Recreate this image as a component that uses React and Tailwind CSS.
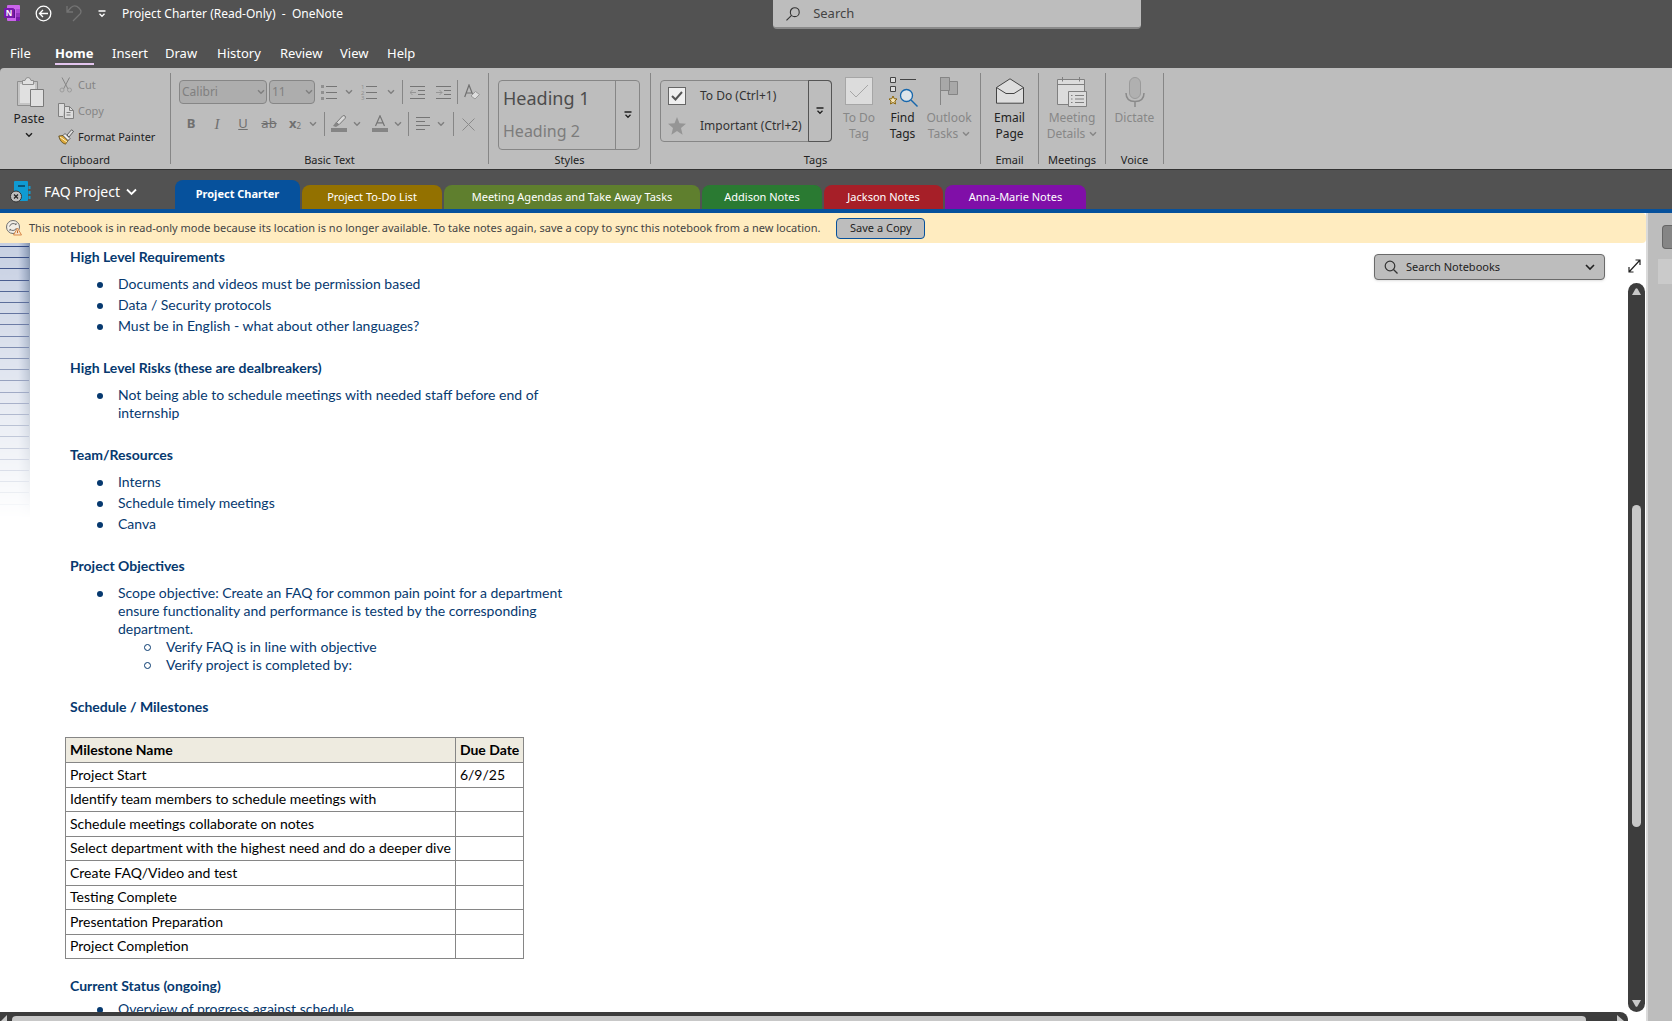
import React, { useState } from 'react';

// CONSTANTS
const MENU = [
  { label: 'File', width: 'w-[45px]' },
  { label: 'Home', width: 'w-[57px]' },
  { label: 'Insert', width: 'w-[53px]' },
  { label: 'Draw', width: 'w-[52px]' },
  { label: 'History', width: 'w-[63px]' },
  { label: 'Review', width: 'w-[60px]' },
  { label: 'View', width: 'w-[47px]' },
  { label: 'Help', width: 'w-[40px]' },
];

const SECTIONS = [
  { label: 'Project Charter', style: 'w-[125px] bg-[#06519c]' },
  { label: 'Project To-Do List', style: 'w-[140px] bg-[#937100]' },
  { label: 'Meeting Agendas and Take Away Tasks', style: 'w-[256px] bg-[#5f7f2e]' },
  { label: 'Addison Notes', style: 'w-[120px] bg-[#2a7a32]' },
  { label: 'Jackson Notes', style: 'w-[119px] bg-[#a61f28]' },
  { label: 'Anna-Marie Notes', style: 'w-[141px] bg-[#800fa8]' },
];

const MILESTONES = [
  ['Project Start', '6/9/25'],
  ['Identify team members to schedule meetings with', ''],
  ['Schedule meetings collaborate on notes', ''],
  ['Select department with the highest need and do a deeper dive', ''],
  ['Create FAQ/Video and test', ''],
  ['Testing Complete', ''],
  ['Presentation Preparation', ''],
  ['Project Completion', ''],
];

// --- ICONS ---
const Chevron = ({ className = '' }) => (
  <svg width="8" height="6" viewBox="0 0 8 6" fill="none" stroke="currentColor" strokeWidth="1.5" className={className}>
    <path d="M1 1.2 4 4.2 7 1.2" />
  </svg>
);

const BarChevron = () => (
  <svg width="8" height="8" viewBox="0 0 8 8" fill="none" stroke="currentColor" strokeWidth="1.3">
    <path d="M0.5 1h7M1.5 3.8 4 6.3 6.500 3.8" />
  </svg>
);

const OneNoteLogo = () => (
  <svg width="17" height="17" viewBox="0 0 17 17">
    <rect x="3" width="13" height="16" rx="1" fill="#ca64ea" />
    <path d="M12 4h4v4h-4z" fill="#ae4bd5" />
    <path d="M12 8h4v4h-4z" fill="#9332bf" />
    <path d="M12 12h4v3q0 1-1 1h-3z" fill="#7719aa" />
    <path d="M3 4h7q1 0 1 1v8H3z" fill="#5b1488" />
    <rect y="3" width="10" height="10" rx="1" fill="#7719aa" />
    <text x="5" y="11" textAnchor="middle" fontSize="8" fontWeight="700" fill="#fff">N</text>
  </svg>
);

const PasteIcon = () => (
  <svg width="28" height="31" viewBox="0 0 28 31" fill="#d2d2d2" stroke="#8f8f8f">
    <path d="M.5 4.500h20v24H.5z" fill="#c4c4c4" />
    <path d="M3 7h15v19H3z" fill="#e0e0e0" stroke="none" />
    <path d="M5.500 7.500v-4h2.500q.5-3 3-3t3 3h2.500v4z" fill="#e0e0e0" />
    <path d="M13.500 12.500h13v17h-13z" fill="#e0e0e0" stroke="#7a7a7a" />
  </svg>
);

const CutIcon = () => (
  <svg width="16" height="16" viewBox="0 0 16 16" fill="none" stroke="#858585">
    <path d="M4 .5 10 12M11.500.5 5.500 12" />
    <circle cx="4" cy="13" r="2" stroke="#9c9c9c" />
    <circle cx="11.500" cy="13" r="2" stroke="#9c9c9c" />
  </svg>
);

const CopyIcon = () => (
  <svg width="16" height="16" viewBox="0 0 16 16" fill="#dcdcdc" stroke="#808080">
    <path d="M5 13.500H.5V.5h6v3" />
    <path d="M6.500 3.500h5l4 4v8h-9z" />
    <path d="M11.500 3.500v4h4M8.500 9.500h4M8.500 12h4" fill="none" />
  </svg>
);

const BrushIcon = () => (
  <svg width="16" height="16" viewBox="0 0 16 16">
    <path d="M.8 7 5 6.500l5 5-2.500 3.700Q2 13.500.8 7z" fill="#dca93b" stroke="#5c4a1c" strokeWidth=".8" />
    <path d="m2 8 7 5" stroke="#fff3c9" />
    <path d="m5 6.500 2-2 5 5-2 2z" fill="#eee" stroke="#444" strokeWidth=".8" />
    <path d="m9 6 4.500-5.200 2 1.600L11 8z" fill="#ddd" stroke="#444" strokeWidth=".8" />
  </svg>
);

const ListIcon = ({ numbered }) => (
  <svg width="16" height="16" viewBox="0 0 16 16" stroke="#757575" className="overflow-visible">
    <path d="M5 2.500h11M5 8.500h11M5 14.500h11" />
    {numbered ? (
      <g stroke="none" fill="#909090" fontSize="6">
        <text x="0" y="4.500">1</text>
        <text x="0" y="10.500">2</text>
        <text x="0" y="16">3</text>
      </g>
    ) : (
      <path d="M0 1h3v3H0zM0 7h3v3H0zM0 13h3v3H0z" fill="#909090" stroke="none" />
    )}
  </svg>
);

const IndentIcon = ({ right }) => (
  <svg width="15" height="15" viewBox="0 0 15 15" fill="none" stroke="#757575">
    <path d="M0 1.500h15M8 5.500h7M8 9.500h7M0 13.500h15" />
    <path d={right ? 'M0 7.500h6M3.500 5 6 7.500 3.500 10' : 'M6 7.500H0M2.500 5 0 7.500 2.500 10'} stroke="#959595" />
  </svg>
);

const ClearFormatIcon = () => (
  <svg width="16" height="16" viewBox="0 0 16 16" fill="none" stroke="#707070">
    <path d="M.7 13 5 1l3.500 9M2 9h5.500" strokeWidth="1.200" />
    <path d="m7 12 4.500-4.500 4 3L11 15z" fill="#ddd" stroke="#999" />
  </svg>
);

const HighlightIcon = () => (
  <svg width="16" height="18" viewBox="0 0 16 18">
    <path d="M0 13h16v4H0z" fill="#858585" />
    <path d="M2 11l3-4 3 3-3 2z" fill="#858585" />
    <path d="M5.500 7.500 11.500 1q1.500-1 2.500 0t0 2.500l-6 6.200z" fill="#d8d8d8" stroke="#777" />
  </svg>
);

const FontColorIcon = () => (
  <svg width="16" height="18" viewBox="0 0 16 18">
    <path d="M0 13h16v4H0z" fill="#858585" />
    <path d="M3.500 11 8 .8 12.500 11M5 7.800h6" fill="none" stroke="#757575" strokeWidth="1.200" />
  </svg>
);

const AlignIcon = () => (
  <svg width="15" height="14" viewBox="0 0 15 14" stroke="#757575">
    <path d="M0 .5h14M0 4.500h9M0 8.500h14M0 12.500h9" />
  </svg>
);

const CrossIcon = () => (
  <svg width="13" height="13" viewBox="0 0 13 13" stroke="#8a8a8a">
    <path d="m.5.5 12 12M12.500.5l-12 12" />
  </svg>
);

const TodoTagIcon = () => (
  <svg width="28" height="28" viewBox="0 0 28 28" fill="none">
    <rect x=".5" y=".5" width="27" height="27" fill="#dcdcdc" stroke="#a6a6a6" />
    <path d="m5 14 6 6L23 8" stroke="#a6a6a6" />
  </svg>
);

const FindTagsIcon = () => (
  <svg width="30" height="30" viewBox="0 0 30 30" fill="none">
    <path d="M2.500.5h5v5h-5zM2.500 9.500h5v5h-5z" fill="#dcdcdc" stroke="#444" />
    <path d="M12 2.500h16" stroke="#444" />
    <path d="m5 19 1.200 2.700 2.800.3-2.100 2 .6 3L5 25.500 2.500 27l.6-3L1 22l2.800-.3z" fill="#f4e3b6" stroke="#8b6508" />
    <circle cx="18.500" cy="18.500" r="6" fill="#dfe5ea" stroke="#1767ac" strokeWidth="1.300" />
    <path d="m23 23 6.500 6.500" stroke="#1767ac" strokeWidth="1.400" />
  </svg>
);

const FlagIcon = () => (
  <svg width="20" height="28" viewBox="0 0 20 28" fill="#a8a8a8" stroke="#858585">
    <path d="M9.500 4.500h9v13h-9z" />
    <path d="M1.500.5h9v13h-9z" />
    <path d="M1.500 0v28" />
  </svg>
);

const MailIcon = () => (
  <svg width="28" height="27" viewBox="0 0 28 27" fill="#dedede" stroke="#444">
    <path d="M.5 10.500 14 1.800l13.500 8.700v15.700H.5z" />
    <path d="m.5 10.500 9.500 6h8l9.500-6" fill="none" />
  </svg>
);

const MeetingIcon = () => (
  <svg width="30" height="30" viewBox="0 0 30 30" fill="#dcdcdc" stroke="#808080">
    <path d="M.5 2.500h27v25H.5z" />
    <path d="M.5 7.500h27M5.500 0v4.500M22.500 0v4.500" fill="none" />
    <path d="M11.500 14.500h18v15h-18z" />
    <path d="M14 18.500h1.500M18 18.500h9M14 22h1.500M18 22h9M14 25.500h1.500M18 25.500h9" />
  </svg>
);

const MicIcon = () => (
  <svg width="20" height="30" viewBox="0 0 20 30" fill="none" stroke="#8a8a8a">
    <rect x="4.500" y=".5" width="11" height="21" rx="5.500" fill="#b0b0b0" stroke="#9a9a9a" />
    <path d="M1 16q0 8.500 9 8.500t9-8.500M10 24.500V30" strokeWidth="1.500" />
  </svg>
);

const NotebookIcon = () => (
  <svg width="22" height="22" viewBox="0 0 22 22">
    <path d="M5 0h12q1 0 1 1v18q0 1-1 1H5q-1 0-1-1V1q0-1 1-1z" fill="#0f9bd3" />
    <path d="M8 4h7v2H8z" fill="#0b5578" />
    <path d="M19.500 5v3m0 2v3m0 2v3" stroke="#0f9bd3" strokeWidth="2" />
    <circle cx="6" cy="15.500" r="5.500" fill="#bdbdbd" stroke="#333" />
    <path d="m4 13.500 4 4m0-4-4 4" stroke="#222" strokeWidth="1.200" />
  </svg>
);

const SyncWarnIcon = () => (
  <svg width="16" height="16" viewBox="0 0 16 16" fill="none" stroke="#6f6f6f">
    <circle cx="7" cy="7" r="6.500" fill="#f2eee6" />
    <path d="M3.500 6.500q1-3 3.500-3 2 0 3 1.500V3M10.500 8q-1 2.500-3.500 2.500-2 0-3-1.500v2" />
    <path d="m11.500 8 4 7h-8z" fill="#f6e0c8" stroke="#d98a4a" />
    <path d="M11.500 10.500V13" stroke="#c0682a" />
  </svg>
);

// Ruled paper strip on the page's left edge, fading out downwards
const PaperEdge = () => (
  <svg width="34" height="276" viewBox="0 0 34 276" className="block shrink-0">
    <defs>
      <linearGradient id="fade" x1="0" y1="0" x2="0" y2="1">
        <stop offset="0" stopColor="#fff" />
        <stop offset=".4" stopColor="#fff" stopOpacity=".6" />
        <stop offset="1" stopColor="#fff" stopOpacity="0" />
      </linearGradient>
      <linearGradient id="edge" x1="0" y1="0" x2="1" y2="0">
        <stop offset=".6" stopColor="#5d78a8" stopOpacity="0" />
        <stop offset="1" stopColor="#4a6080" stopOpacity=".55" />
      </linearGradient>
      <mask id="paper"><rect width="34" height="276" fill="url(#fade)" /></mask>
    </defs>
    <g mask="url(#paper)">
      <rect width="30" height="276" fill="#c6cfe2" />
      <rect width="30" height="276" fill="url(#edge)" />
      {Array.from({ length: 24 }, (_, i) => (
        <rect key={i} y={Math.round(3 + i * 11.2)} width="29" height="1" fill="#2f4680" />
      ))}
    </g>
  </svg>
);

// --- COMPONENTS ---
const Group = ({ label, className = '', body = '', children }) => (
  <section aria-label={label} className={`flex shrink-0 flex-col ${className}`}>
    <div className={`flex h-[84px] pt-1 ${body}`}>{children}</div>
    <div className="text-center text-[11px] leading-4 text-[#222]">{label}</div>
  </section>
);

const Divider = () => <div className="mt-[5px] h-[91px] w-px shrink-0 bg-[#868686]" />;
const Rule = ({ className = '' }) => <div className={`h-6 w-px shrink-0 bg-[#868686] ${className}`} />;

const Tool = ({ label, children }) => (
  <button aria-label={label} className="flex h-6 w-6 shrink-0 items-center justify-center text-[#707070]">{children}</button>
);

const Drop = ({ label }) => (
  <button aria-label={label} className="flex h-6 w-3 shrink-0 items-center justify-center text-[#808080]"><Chevron /></button>
);

const FontSelect = ({ label, value, className }) => (
  <div className={`relative shrink-0 ${className}`}>
    <select aria-label={label} defaultValue={value} className="h-6 w-full appearance-none rounded border border-[#868686] bg-[#adadad] px-[2px] text-[12px] text-[#808080]">
      <option>{value}</option>
    </select>
    <Chevron className="pointer-events-none absolute top-[9px] right-[2px] text-[#808080]" />
  </div>
);

const BigButton = ({ icon, lines, muted, drop, className }) => (
  <button className={`flex flex-col items-center pt-[5px] text-[12px] leading-4 ${muted ? 'text-[#878787]' : 'text-[#222]'} ${className}`}>
    <span className="flex h-[33px] items-start justify-center">{icon}</span>
    <span>{lines[0]}</span>
    <span className="flex items-center gap-1">{lines[1]}{drop && <Chevron />}</span>
  </button>
);

const Ribbon = () => (
  <div className="flex h-[102px] shrink-0 overflow-hidden rounded-tl border-b border-[#333] bg-[#bdbdbd]">
    <Group label="Clipboard" className="w-[170px]">
      <button className="flex w-[58px] flex-col items-center pt-[5px] pl-1 text-[12px] text-[#222]">
        <PasteIcon />
        <span className="mt-[3px] mr-1 leading-4">Paste</span>
        <Chevron className="mt-[5px] mr-1" />
      </button>
      <div className="flex flex-col text-[11px]">
        <button className="flex h-[26px] items-center gap-1 text-[#858585]"><CutIcon />Cut</button>
        <button className="flex h-[26px] items-center gap-1 text-[#858585]"><CopyIcon />Copy</button>
        <button className="flex h-[26px] items-center gap-1 text-[#222]"><BrushIcon />Format Painter</button>
      </div>
    </Group>
    <Divider />
    <Group label="Basic Text" className="w-[317px]" body="pl-2">
      <div className="flex flex-col gap-2 pt-2">
        <div className="flex items-center">
          <FontSelect label="Font" value="Calibri" className="w-[88px]" />
          <FontSelect label="Font size" value="11" className="ml-[2px] w-[46px]" />
          <div className="mr-[2px] ml-[2px]"><Tool label="Bullets"><ListIcon /></Tool></div>
          <Drop label="Bullet styles" />
          <div className="mr-1 ml-[2px]"><Tool label="Numbering"><ListIcon numbered /></Tool></div>
          <Drop label="Number styles" />
          <Rule className="mr-[2px] ml-[5px]" />
          <Tool label="Decrease indent"><IndentIcon /></Tool>
          <div className="ml-[2px]"><Tool label="Increase indent"><IndentIcon right /></Tool></div>
          <Rule className="mr-[2px] ml-[2px]" />
          <Tool label="Clear formatting"><ClearFormatIcon /></Tool>
        </div>
        <div className="flex items-center">
          <div className="flex gap-[2px] text-[13px]">
            <Tool label="Bold"><b>B</b></Tool>
            <Tool label="Italic"><i className="font-['Liberation_Serif',serif] text-[15px]">I</i></Tool>
            <Tool label="Underline"><u>U</u></Tool>
            <Tool label="Strikethrough"><s>ab</s></Tool>
            <Tool label="Subscript"><b>x</b><sub className="text-[8px]">2</sub></Tool>
          </div>
          <Drop label="Script styles" />
          <Rule className="mr-[2px] ml-[5px]" />
          <Tool label="Highlight"><HighlightIcon /></Tool>
          <Drop label="Highlight colors" />
          <div className="ml-[5px]"><Tool label="Font color"><FontColorIcon /></Tool></div>
          <Drop label="Font colors" />
          <Rule className="mr-[2px] ml-1" />
          <Tool label="Align"><AlignIcon /></Tool>
          <Drop label="Alignments" />
          <Rule className="mr-[2px] ml-[6px]" />
          <Tool label="Delete"><CrossIcon /></Tool>
        </div>
      </div>
    </Group>
    <Divider />
    <Group label="Styles" className="w-[161px]" body="pl-[9px]">
      <div className="mt-2 flex h-[70px] w-[142px] rounded border border-[#868686]">
        <div className="flex flex-1 flex-col justify-around pb-[2px] pl-1 text-left">
          <button className="text-left text-[18px] leading-6 text-[#4c4c4c]">Heading 1</button>
          <button className="text-left text-[16px] leading-6 text-[#7c7c7c]">Heading 2</button>
        </div>
        <button aria-label="More styles" className="flex w-6 items-center justify-center border-l border-[#868686] text-[#222]"><BarChevron /></button>
      </div>
    </Group>
    <Divider />
    <Group label="Tags" className="w-[329px]" body="pl-[9px]">
      <div className="mt-2 flex h-[62px] w-[172px] shrink-0 rounded border border-[#868686]">
        <div className="flex flex-1 flex-col justify-around pl-[7px] text-[12px] text-[#333]">
          <button className="flex items-center gap-[14px] whitespace-nowrap">
            <svg width="18" height="18" viewBox="0 0 18 18" fill="none">
              <rect x=".5" y=".5" width="17" height="17" fill="#f0f0f0" stroke="#666" />
              <path d="m4 9 3.500 3.500L14 5" stroke="#555" strokeWidth="2" />
            </svg>
            To Do (Ctrl+1)
          </button>
          <button className="flex items-center gap-[14px] whitespace-nowrap">
            <svg width="18" height="18" viewBox="0 0 18 18" fill="#959595">
              <path d="m9 0 2.500 6.300 6.500.5-5 4.200 1.600 6.700L9 14l-5.600 3.700L5 11 0 6.800l6.500-.5z" />
            </svg>
            Important (Ctrl+2)
          </button>
        </div>
        <button aria-label="More tags" className="-m-px flex w-6 items-center justify-center rounded-r border border-[#555] text-[#222]"><BarChevron /></button>
      </div>
      <BigButton className="ml-[5px] w-[44px]" muted icon={<TodoTagIcon />} lines={['To Do', 'Tag']} />
      <BigButton className="w-[43px]" icon={<FindTagsIcon />} lines={['Find', 'Tags']} />
      <BigButton className="w-[50px]" muted drop icon={<FlagIcon />} lines={['Outlook', 'Tasks']} />
    </Group>
    <Divider />
    <Group label="Email" className="w-[57px]">
      <BigButton className="w-full" icon={<MailIcon />} lines={['Email', 'Page']} />
    </Group>
    <Divider />
    <Group label="Meetings" className="w-[66px]">
      <BigButton className="w-full" muted drop icon={<MeetingIcon />} lines={['Meeting', 'Details']} />
    </Group>
    <Divider />
    <Group label="Voice" className="w-[57px]">
      <BigButton className="w-full" muted icon={<MicIcon />} lines={['Dictate', '']} />
    </Group>
    <Divider />
  </div>
);

const Heading = ({ children }) => <h2 className="font-bold">{children}</h2>;

const Bullets = ({ items }) => (
  <ul className="mt-[9px] mb-6 flex flex-col gap-[3px]">
    {items.map(item => <Bullet key={item}>{item}</Bullet>)}
  </ul>
);

const Bullet = ({ children }) => (
  <li className="flex">
    <span className="mt-[7px] mr-[15px] ml-[27px] h-[6px] w-[6px] shrink-0 rounded-full bg-[#06396f]" />
    <div>{children}</div>
  </li>
);

const SubBullet = ({ children }) => (
  <li className="flex">
    <span className="mt-[6px] mr-[15px] ml-[26px] h-[7px] w-[7px] shrink-0 rounded-full border border-[#06396f]" />
    <span>{children}</span>
  </li>
);

const Note = () => (
  <article className="w-[535px] shrink-0 pt-[5px] pl-9 font-['Lato','Open_Sans',sans-serif] text-[14px] leading-[18px] text-[#06396f]">
    <Heading>High Level Requirements</Heading>
    <Bullets items={['Documents and videos must be permission based', 'Data / Security protocols', 'Must be in English - what about other languages?']} />
    <Heading>High Level Risks (these are dealbreakers)</Heading>
    <Bullets items={['Not being able to schedule meetings with needed staff before end of internship']} />
    <Heading>Team/Resources</Heading>
    <Bullets items={['Interns', 'Schedule timely meetings', 'Canva']} />
    <Heading>Project Objectives</Heading>
    <ul className="mt-[9px] mb-6">
      <Bullet>
        Scope objective: Create an FAQ for common pain point for a department ensure functionality and performance is tested by the corresponding department.
        <ul>
          <SubBullet>Verify FAQ is in line with objective</SubBullet>
          <SubBullet>Verify project is completed by:</SubBullet>
        </ul>
      </Bullet>
    </ul>
    <Heading>Schedule / Milestones</Heading>
    <table className="mt-[21px] -ml-[5px] h-[222px] w-[453px] border-collapse text-left text-black">
      <thead>
        <tr className="h-[25px] bg-[#eeebe0]">
          <th className="border border-[#868686] px-1">Milestone Name</th>
          <th className="w-[68px] border border-[#868686] px-1 whitespace-nowrap">Due Date</th>
        </tr>
      </thead>
      <tbody>
        {MILESTONES.map(([name, due]) => (
          <tr key={name}>
            <td className="border border-[#868686] px-1 whitespace-nowrap">{name}</td>
            <td className="border border-[#868686] px-1">{due}</td>
          </tr>
        ))}
      </tbody>
    </table>
    <div className="mt-[18px]"><Heading>Current Status (ongoing)</Heading></div>
    <ul className="mt-[5px]"><Bullet>Overview of progress against schedule</Bullet></ul>
  </article>
);

// --- MAIN APP ---
export default function App() {
  const [menu, setMenu] = useState('Home');
  const [section, setSection] = useState('Project Charter');

  return (
    <div className="flex h-screen flex-col overflow-hidden bg-[#525252] font-['Noto_Sans','Open_Sans',sans-serif] text-[12px] text-white">
      <header className="flex h-[34px] shrink-0 items-start">
        <div className="flex h-[27px] flex-1 items-center pl-1">
          <OneNoteLogo />
          <button aria-label="Back" className="ml-[14px]">
            <svg width="17" height="17" viewBox="0 0 17 17" fill="none" stroke="#fff" strokeWidth="1.300">
              <circle cx="8.500" cy="8.500" r="7.300" />
              <path d="M13 8.500H4.500M8 5 4.500 8.500 8 12" />
            </svg>
          </button>
          <button aria-label="Undo" className="ml-[14px]">
            <svg width="16" height="17" viewBox="0 0 16 17" fill="none" stroke="#747474" strokeWidth="1.300">
              <path d="M1 1v6h6M1 7l4-4.500Q9-1 13 3t0 7l-6 6" />
            </svg>
          </button>
          <button aria-label="Customize toolbar" className="ml-4"><BarChevron /></button>
          <h1 className="ml-4 whitespace-pre">Project Charter (Read-Only)  -  OneNote</h1>
        </div>
        <label className="flex h-[29px] w-[22%] items-center rounded-b border-b-2 border-[#8a8a8a] bg-[#bdbdbd] pl-[13px] text-[#444]">
          <svg width="16" height="16" viewBox="0 0 16 16" fill="none" stroke="#333" strokeWidth="1.200">
            <circle cx="9.500" cy="6" r="4.800" />
            <path d="M6 9.500.5 15" />
          </svg>
          <input aria-label="Search" placeholder="Search" className="ml-3 w-full bg-transparent text-[13px] outline-none placeholder:text-[#444]" />
        </label>
        <div className="flex-[0.690]" />
      </header>

      <nav className="flex h-[34px] shrink-0 items-start pt-[9px] pl-[10px] text-[13px]">
        {MENU.map(m => (
          <div key={m.label} className={m.width}>
            <button onClick={() => setMenu(m.label)} className={`border-b-2 leading-5 ${menu === m.label ? 'border-[#e3c5ee] font-bold' : 'border-transparent'}`}>{m.label}</button>
          </div>
        ))}
      </nav>

      <Ribbon />

      <div className="flex h-[43px] shrink-0 items-end border-b-4 border-[#06519c]">
        <button className="flex h-full w-[175px] items-center pt-1 pl-[10px] text-[14px]">
          <NotebookIcon />
          <span className="ml-3">FAQ Project</span>
          <svg width="11" height="8" viewBox="0 0 11 8" fill="none" stroke="currentColor" strokeWidth="1.800" className="ml-[6px]">
            <path d="m1 1.500 4.500 4.500L10 1.500" />
          </svg>
        </button>
        <div className="flex items-end gap-[2px] text-[11px]">
          {SECTIONS.map(s => (
            <button key={s.label} onClick={() => setSection(s.label)} className={`rounded-t-lg whitespace-nowrap ${s.style} ${section === s.label ? 'h-[29px] font-bold' : 'h-6'}`}>{s.label}</button>
          ))}
        </div>
      </div>

      <div className="flex min-h-0 flex-1">
        <main className="flex min-w-0 flex-1 flex-col bg-white">
          <div className="flex h-[30px] shrink-0 items-center rounded-r bg-[#ffecc0] pl-[6px] text-[11px] text-[#444]">
            <SyncWarnIcon />
            <p className="ml-[7px] whitespace-nowrap">This notebook is in read-only mode because its location is no longer available. To take notes again, save a copy to sync this notebook from a new location.</p>
            <button className="ml-4 h-[21px] w-[89px] rounded border border-[#06519c] bg-[#bdbdbd] text-[#222]">Save a Copy</button>
          </div>
          <div className="flex min-h-0 flex-1">
            <div className="flex min-w-0 flex-1 flex-col">
              <div className="flex min-h-0 flex-1 justify-between overflow-hidden">
                <div className="flex items-start">
                  <PaperEdge />
                  <Note />
                </div>
                <div className="mt-[11px] mr-[23px] flex h-[26px] w-[231px] items-center rounded border border-[#6a6a6a] bg-[#bdbdbd] px-[9px] text-[11px] text-[#222] shadow">
                  <svg width="14" height="14" viewBox="0 0 14 14" fill="none" stroke="#333" strokeWidth="1.200">
                    <circle cx="6" cy="6" r="4.800" />
                    <path d="m9.500 9.500 4 4" />
                  </svg>
                  <input aria-label="Search Notebooks" placeholder="Search Notebooks" className="ml-2 min-w-0 flex-1 bg-transparent outline-none placeholder:text-[#222]" />
                  <svg width="10" height="7" viewBox="0 0 10 7" fill="none" stroke="#222" strokeWidth="1.600"><path d="m1 1 4 4 4-4" /></svg>
                </div>
              </div>
              <div className="flex h-[9px] shrink-0 items-end gap-1 rounded-tr-lg bg-[#3d3d3d] pr-1 pl-px">
                <svg width="7" height="6" viewBox="0 0 7 6" fill="#c8c8c8"><path d="M0 6 6 0v6z" /></svg>
                <div className="h-[5px] w-[97%] rounded-t bg-[#c8c8c8]" />
                <svg width="7" height="6" viewBox="0 0 7 6" fill="#c8c8c8" className="ml-auto"><path d="M0 0l7 6H0z" /></svg>
              </div>
            </div>
            <div className="flex w-[18px] shrink-0 flex-col items-start">
              <button aria-label="Full page view" className="flex h-10 items-start pt-4">
                <svg width="13" height="14" viewBox="0 0 13 14" fill="none" stroke="#222" strokeWidth="1.200">
                  <path d="m1 13 11-12M7.500 1H12v5M1 8v5h4.500" />
                </svg>
              </button>
              <div className="mb-[9px] flex w-[17px] flex-1 flex-col items-center rounded-full bg-[#3d3d3d] py-[5px]">
                <svg width="9" height="8" viewBox="0 0 9 8" fill="#c8c8c8"><path d="M3.500.8q1-1.300 2 0L9 7H0z" /></svg>
                <div className="flex-[202]" />
                <div className="w-[9px] flex-[312] rounded-full bg-[#c8c8c8]" />
                <div className="flex-[167]" />
                <svg width="9" height="7" viewBox="0 0 9 7" fill="#c8c8c8"><path d="M0 0h9L5.500 6.200q-1 1.300-2 0z" /></svg>
              </div>
            </div>
          </div>
        </main>
        <aside className="flex w-[26px] shrink-0 flex-col items-end border-l-2 border-[#dadada] bg-[#bdbdbd]">
          <div className="mt-3 h-6 w-[10px] rounded-l border border-r-0 border-[#666] bg-[#858585]" />
          <div className="mt-[10px] h-[25px] w-[14px] bg-[#cacaca]" />
        </aside>
      </div>
    </div>
  );
}
